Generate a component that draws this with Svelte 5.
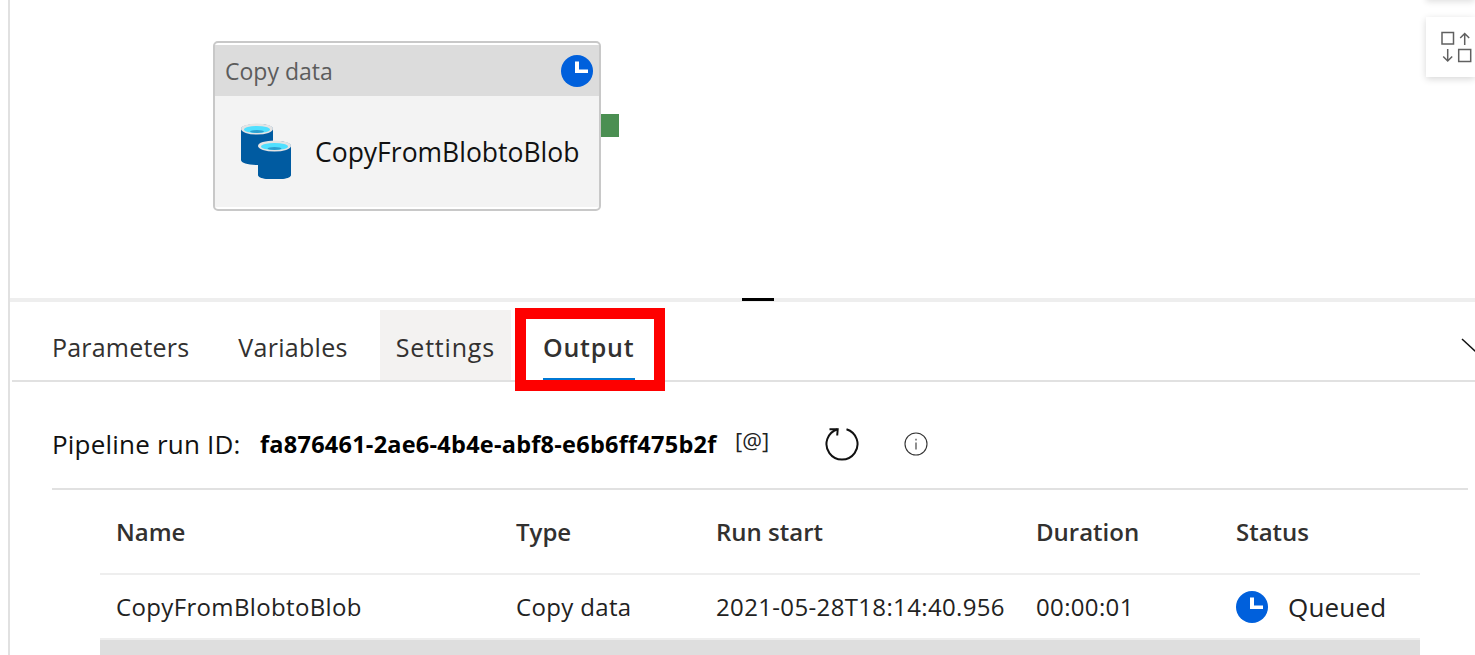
<script>
  const tabs = ['Parameters', 'Variables', 'Settings', 'Output'];
  const activeTab = 'Output';
  const hoverTab = 'Settings';

  const runs = [
    { name: 'CopyFromBlobtoBlob', type: 'Copy data', start: '2021-05-28T18:14:40.956', duration: '00:00:01', status: 'Queued' }
  ];
</script>

{#snippet clock(size)}
  <svg class="clock" width={size} height={size} viewBox="0 0 32 32">
    <circle cx="16" cy="16" r="16" fill="#0060dc" />
    <path d="M14 6.500h4V14.500h9v3.500H14z" fill="#fff" />
  </svg>
{/snippet}

<div class="page">
  <section class="canvas">
    <div class="node">
      <div class="node-head">
        <span>Copy data</span>
        {@render clock(32)}
      </div>
      <div class="node-body">
        <svg class="blob" width="50" height="56" viewBox="0 0 50 56">
          <path d="M0 6c0-3 7-5 16-5s16 2 16 5v31c0 3-7 5-16 5S0 40 0 37z" fill="#005ba1" />
          <ellipse cx="16" cy="6" rx="16" ry="5.500" fill="#e4e4e4" />
          <ellipse cx="16" cy="6.500" rx="13" ry="3.600" fill="#50e0ff" />
          <ellipse cx="16" cy="8.500" rx="7" ry="1.500" fill="#2c9fd0" />
          <path d="M17 23c0-3 7-5 16.500-5S50 20 50 23v29c0 3-7 4.500-16.500 4.500S17 55 17 52z" fill="#005ba1" />
          <ellipse cx="33.500" cy="23" rx="16.500" ry="5.500" fill="#e4e4e4" />
          <ellipse cx="33.500" cy="23.500" rx="13.500" ry="3.600" fill="#50e0ff" />
          <ellipse cx="33.500" cy="25.500" rx="7" ry="1.500" fill="#2c9fd0" />
        </svg>
        <span class="node-name">CopyFromBlobtoBlob</span>
      </div>
      <div class="node-port"></div>
    </div>

    <div class="float-top"></div>
    <button class="float-btn" aria-label="Auto align">
      <svg width="31" height="32" viewBox="0 0 31 32" fill="none" stroke="#606060" stroke-width="1.500">
        <rect x="1" y="1.500" width="11.500" height="11.500" />
        <path d="M23.700 14V2.500M19.200 7l4.500-4.500L28.200 7" />
        <rect x="17.700" y="18.500" width="12" height="12" />
        <path d="M6.700 18v12M2.200 25.500l4.500 4.500 4.500-4.500" />
      </svg>
    </button>
  </section>

  <div class="splitter"><div class="grip"></div></div>

  <section class="panel">
    <div class="tabs">
      {#each tabs as tab}
        <div class="tab" class:active={tab === activeTab} class:hover={tab === hoverTab}>{tab}</div>
      {/each}
      <svg class="collapse" width="16" height="16" viewBox="0 0 16 16" fill="none" stroke="#111" stroke-width="1.500">
        <path d="M1 1l14 13" />
      </svg>
      <div class="highlight"></div>
    </div>

    <div class="content">
      <div class="run-id">
        <span class="run-label">Pipeline run ID:</span>
        <strong>fa876461-2ae6-4b4e-abf8-e6b6ff475b2f</strong>
        <span class="copy">[@]</span>
        <svg class="refresh" width="36" height="36" viewBox="0 0 36 36" fill="none" stroke="#111" stroke-width="2">
          <path d="M13.500 3.200a15.500 15.500 0 1 0 9 0" />
          <path d="M5.500 3.300h8.200l-.5 6.200" />
        </svg>
        <svg class="info" width="24" height="24" viewBox="0 0 24 24" fill="none" stroke="#333" stroke-width="1.100">
          <circle cx="12" cy="12" r="11" />
          <path d="M12 10.500v7M12 6.800v1.600" />
        </svg>
      </div>

      <table>
        <thead>
          <tr>
            <th class="c-name">Name</th>
            <th class="c-type">Type</th>
            <th class="c-start">Run start</th>
            <th class="c-dur">Duration</th>
            <th>Status</th>
          </tr>
        </thead>
        <tbody>
          {#each runs as run}
            <tr>
              <td>{run.name}</td>
              <td>{run.type}</td>
              <td>{run.start}</td>
              <td>{run.duration}</td>
              <td>
                <div class="status">
                  {@render clock(32)}
                  <span>{run.status}</span>
                </div>
              </td>
            </tr>
          {/each}
          <tr class="selected"><td colspan="5"></td></tr>
        </tbody>
      </table>
    </div>
  </section>
</div>

<style>
  :global(body) {
    background: #fff;
    overflow: hidden;
  }

  .page {
    height: 655px;
    margin-left: 8px;
    border-left: 2px solid #e1e1e1;
    font-family: "Open Sans", sans-serif;
    color: #323130;
    overflow: hidden;
  }

  .canvas {
    position: relative;
    height: 298px;
  }

  .node {
    position: absolute;
    left: 203px;
    top: 41px;
    width: 384px;
    height: 162px;
    padding: 2px 0;
    border: 2px solid #c8c8c8;
    border-radius: 5px;
    background: #fff;
    display: flex;
    flex-direction: column;
  }

  .node-head {
    flex: none;
    height: 51px;
    padding: 0 6px 0 10px;
    display: flex;
    align-items: center;
    justify-content: space-between;
    background: #dcdcdc;
    color: #5c5c5c;
    font-size: 23px;
  }

  .node-head span {
    padding-top: 1px;
  }

  .node-body {
    flex: 1;
    display: flex;
    align-items: flex-start;
    gap: 24px;
    padding: 27px 0 0 26px;
    background: #f3f3f3;
  }

  .node-name {
    font-size: 26.500px;
    line-height: 58px;
    color: #111;
  }

  .node-port {
    position: absolute;
    left: 386px;
    top: 71px;
    width: 18px;
    height: 23px;
    background: #4b8f52;
  }

  .float-top {
    position: absolute;
    right: 0;
    top: -40px;
    width: 49px;
    height: 40px;
    background: #fff;
    box-shadow: 0 2px 6px rgba(0, 0, 0, 0.12);
  }

  .float-btn {
    position: absolute;
    right: 0;
    top: 17px;
    width: 49px;
    height: 60px;
    padding: 0 0 0 15px;
    border: none;
    background: #fff;
    box-shadow: 0 2px 7px rgba(0, 0, 0, 0.16);
    display: flex;
    align-items: center;
  }

  .splitter {
    position: relative;
    height: 4px;
    background: #eeeeee;
  }

  .grip {
    position: absolute;
    left: 732px;
    top: 0;
    width: 32px;
    height: 3px;
    background: #000;
  }

  .tabs {
    position: relative;
    box-sizing: border-box;
    height: 80px;
    margin-left: 2px;
    padding: 8px 0 0 24px;
    display: flex;
    gap: 16px;
    border-bottom: 2px solid #e1e1e1;
  }

  .tab {
    position: relative;
    box-sizing: border-box;
    height: 70px;
    padding: 3px 16px 0;
    display: flex;
    align-items: center;
    font-size: 25px;
  }

  .tab:nth-child(1) { letter-spacing: 0.2px; margin-right: 1px; }
  .tab:nth-child(2) { letter-spacing: 0.3px; }
  .tab:nth-child(3) { letter-spacing: 0.8px; }
  .tab:nth-child(4) { letter-spacing: 0.8px; }

  .tab.hover {
    background: #f3f2f1;
  }

  .tab.active {
    font-weight: 600;
  }

  .tab.active::after {
    content: "";
    position: absolute;
    left: 16px;
    right: 16px;
    bottom: 0;
    height: 2px;
    background: #0078d4;
  }

  .highlight {
    position: absolute;
    left: 503px;
    top: 6px;
    width: 150px;
    height: 83px;
    box-sizing: border-box;
    border: 11px solid #fe0000;
  }

  .collapse {
    position: absolute;
    left: 1449px;
    top: 36px;
  }

  .content {
    padding-left: 42px;
  }

  .run-id {
    width: 1416px;
    height: 108px;
    padding-top: 18px;
    display: flex;
    align-items: center;
    border-bottom: 2px solid #e1e1e1;
    box-sizing: border-box;
  }

  .run-label {
    font-size: 26px;
    letter-spacing: 0.2px;
    width: 208px;
    flex: none;
    color: #111;
    white-space: nowrap;
  }

  .run-id strong {
    font-size: 23.500px;
    color: #000;
    letter-spacing: 0.24px;
    width: 475px;
    flex: none;
    white-space: nowrap;
  }

  .copy {
    font-size: 22px;
    width: 89px;
    flex: none;
    color: #222;
    margin-top: -8px;
  }

  .refresh {
    flex: none;
    margin-right: 44px;
  }

  .info {
    flex: none;
  }

  table {
    margin-left: 48px;
    width: 1320px;
    border-collapse: collapse;
    table-layout: fixed;
    font-size: 24px;
  }

  th {
    box-sizing: border-box;
    height: 84px;
    padding: 0 0 0 16px;
    text-align: left;
    font-weight: 600;
    border-bottom: 2px solid #eeeeee;
  }

  .c-name { width: 400px; }
  .c-type { width: 200px; }
  .c-start { width: 320px; }
  .c-dur { width: 200px; }

  td {
    box-sizing: border-box;
    height: 65px;
    padding: 0 0 0 16px;
    color: #222;
    letter-spacing: 0.35px;
    white-space: nowrap;
    overflow: hidden;
  }

  .status {
    display: flex;
    align-items: center;
    gap: 20px;
    font-size: 26px;
    letter-spacing: 0.2px;
  }

  .clock {
    flex: none;
  }

  .selected td {
    height: 20px;
    padding: 0;
    background: #dedede;
    border-top: 2px solid #eeeeee;
  }
</style>
